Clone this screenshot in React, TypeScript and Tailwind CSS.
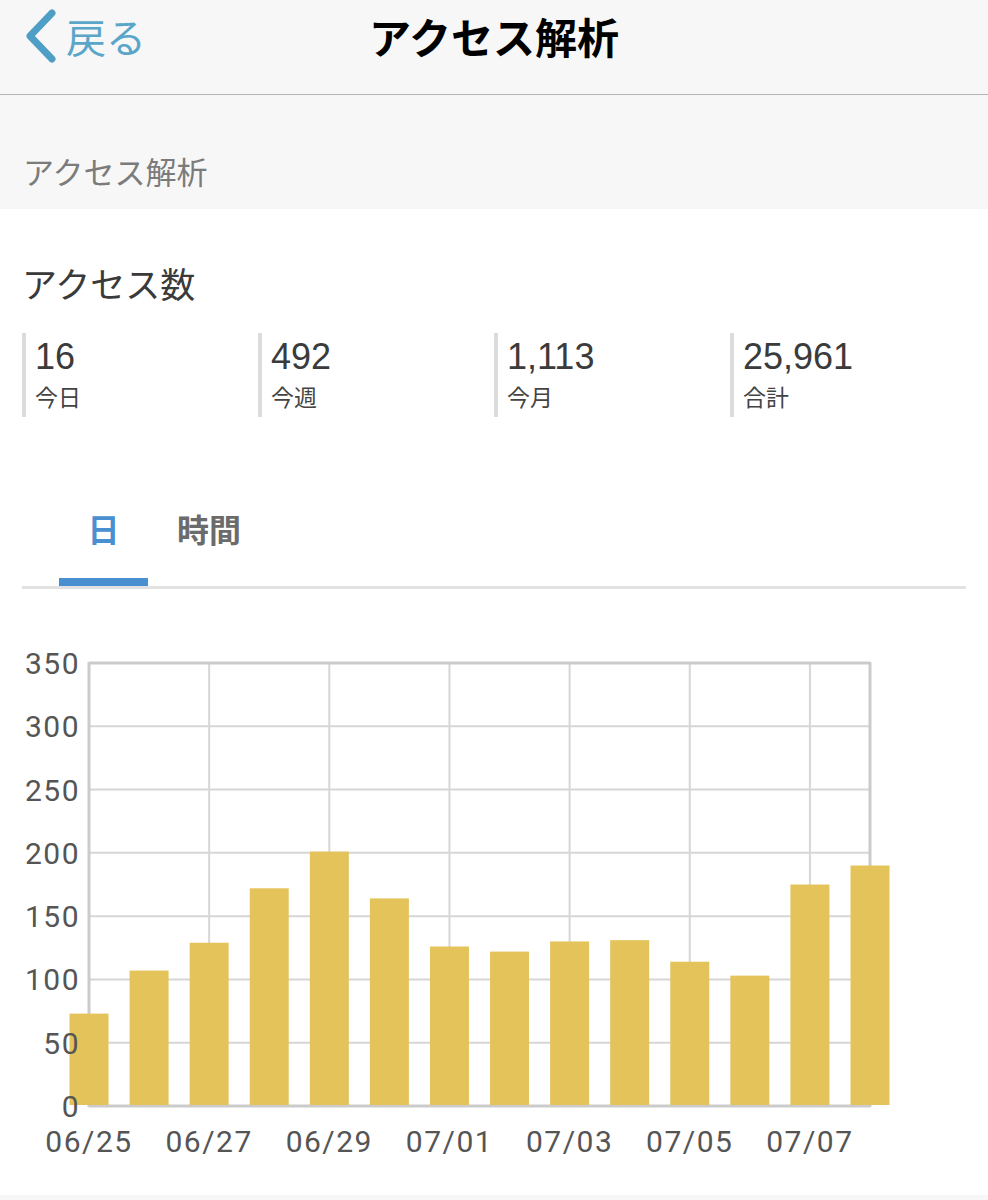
const jp = { fontFamily: '"Noto Sans CJK JP", "Noto Sans", sans-serif' }

const stats = [
  { value: '16', label: '今日' },
  { value: '492', label: '今週' },
  { value: '1,113', label: '今月' },
  { value: '25,961', label: '合計' },
]

const days = [
  { label: '06/25', count: 73 },
  { label: '06/26', count: 107 },
  { label: '06/27', count: 129 },
  { label: '06/28', count: 172 },
  { label: '06/29', count: 201 },
  { label: '06/30', count: 164 },
  { label: '07/01', count: 126 },
  { label: '07/02', count: 122 },
  { label: '07/03', count: 130 },
  { label: '07/04', count: 131 },
  { label: '07/05', count: 114 },
  { label: '07/06', count: 103 },
  { label: '07/07', count: 175 },
  { label: '07/08', count: 190 },
]

function AccessChart() {
  const left = 89
  const right = 870
  const top = 74
  const bottom = 517
  const max = 350
  const step = (right - left) / (days.length - 1)
  const y = (v: number) => bottom - ((bottom - top) * v) / max
  const ticks = [0, 50, 100, 150, 200, 250, 300, 350]
  const labelFont = 'Roboto, "Liberation Sans", sans-serif'

  return (
    <svg width={988} height={606} className="block">
      {ticks.map((t) => (
        <line key={t} x1={left} x2={right} y1={y(t)} y2={y(t)} stroke="#d6d6d6" strokeWidth={2} />
      ))}
      {days.map((d, i) =>
        i % 2 === 0 && i > 0 ? (
          <line key={d.label} x1={left + i * step} x2={left + i * step} y1={top} y2={bottom} stroke="#d6d6d6" strokeWidth={2} />
        ) : null,
      )}
      <line x1={left} x2={left} y1={top - 1} y2={bottom + 1} stroke="#cbcbcb" strokeWidth={3} />
      <line x1={right} x2={right} y1={top - 1} y2={bottom + 1} stroke="#cbcbcb" strokeWidth={3} />
      <line x1={left} x2={right} y1={top} y2={top} stroke="#cbcbcb" strokeWidth={3} />
      <line x1={left} x2={right} y1={bottom} y2={bottom} stroke="#cbcbcb" strokeWidth={3} />
      {days.map((d, i) => (
        <rect key={d.label} x={left + i * step - 19.5} y={y(d.count)} width={39} height={bottom - 1 - y(d.count)} fill="#e4c35b" />
      ))}
      {ticks.map((t) => (
        <text key={t} x={80} y={y(t) + 11} textAnchor="end" fontSize={30} fill="#555" fontFamily={labelFont} letterSpacing={1.5}>
          {t}
        </text>
      ))}
      {days.map((d, i) =>
        i % 2 === 0 ? (
          <text key={d.label} x={left + i * step} y={563} textAnchor="middle" fontSize={30} fill="#555" fontFamily={labelFont} letterSpacing={1.5}>
            {d.label}
          </text>
        ) : null,
      )}
    </svg>
  )
}

export default function App() {
  return (
    <div className="w-[988px] min-h-[1200px] bg-[#f7f7f7]" style={jp}>
      <header className="relative h-[95px] border-b border-[#b4b4b4] bg-[#f7f7f7]">
        <div className="absolute left-[22px] top-[8px] flex items-center">
          <svg width={36} height={56} viewBox="0 0 36 56">
            <path d="M30 5 L8 28 L30 51" fill="none" stroke="#4e9ec6" strokeWidth={7} strokeLinecap="round" strokeLinejoin="round" />
          </svg>
          <span className="ml-[8px] text-[40px] leading-none text-[#5aa6c9]">戻る</span>
        </div>
        <h1 className="pt-[12px] text-center text-[42px] font-bold leading-[48px] text-black">アクセス解析</h1>
      </header>

      <div className="h-[114px] px-[23px] pt-[58px]">
        <p className="text-[31px] leading-[36px] text-[#7b7b7b]">アクセス解析</p>
      </div>

      <main className="bg-white">
        <h2 className="px-[22px] pt-[56px] text-[35px] leading-[36px] text-[#3a3a3a]">アクセス数</h2>

        <div className="mt-[32px] flex px-[22px]">
          {stats.map((s) => (
            <div key={s.label} className="h-[84px] w-[236px] border-l-4 border-[#dcdcdc] pl-[9px]">
              <div className="pt-[4px] text-[36px] leading-[40px] text-[#3b3b3b]" style={{ fontFamily: '"Liberation Sans", Roboto, sans-serif' }}>
                {s.value}
              </div>
              <div className="mt-[4px] text-[23px] leading-[30px] text-[#444]">{s.label}</div>
            </div>
          ))}
        </div>

        <div className="mx-[22px] mt-[53px]">
          <div className="flex">
            <div className="relative ml-[37px] flex h-[116px] w-[89px] items-center justify-center">
              <span className="text-[32px] font-bold text-[#4a8fcf]">日</span>
              <div className="absolute bottom-0 left-0 h-[8px] w-full bg-[#4a8fcf]" />
            </div>
            <div className="flex h-[116px] w-[122px] items-center justify-center">
              <span className="text-[32px] font-bold text-[#6b6b6b]">時間</span>
            </div>
          </div>
          <div className="h-[3px] bg-[#e2e2e2]" />
        </div>

        <AccessChart />
      </main>
    </div>
  )
}
